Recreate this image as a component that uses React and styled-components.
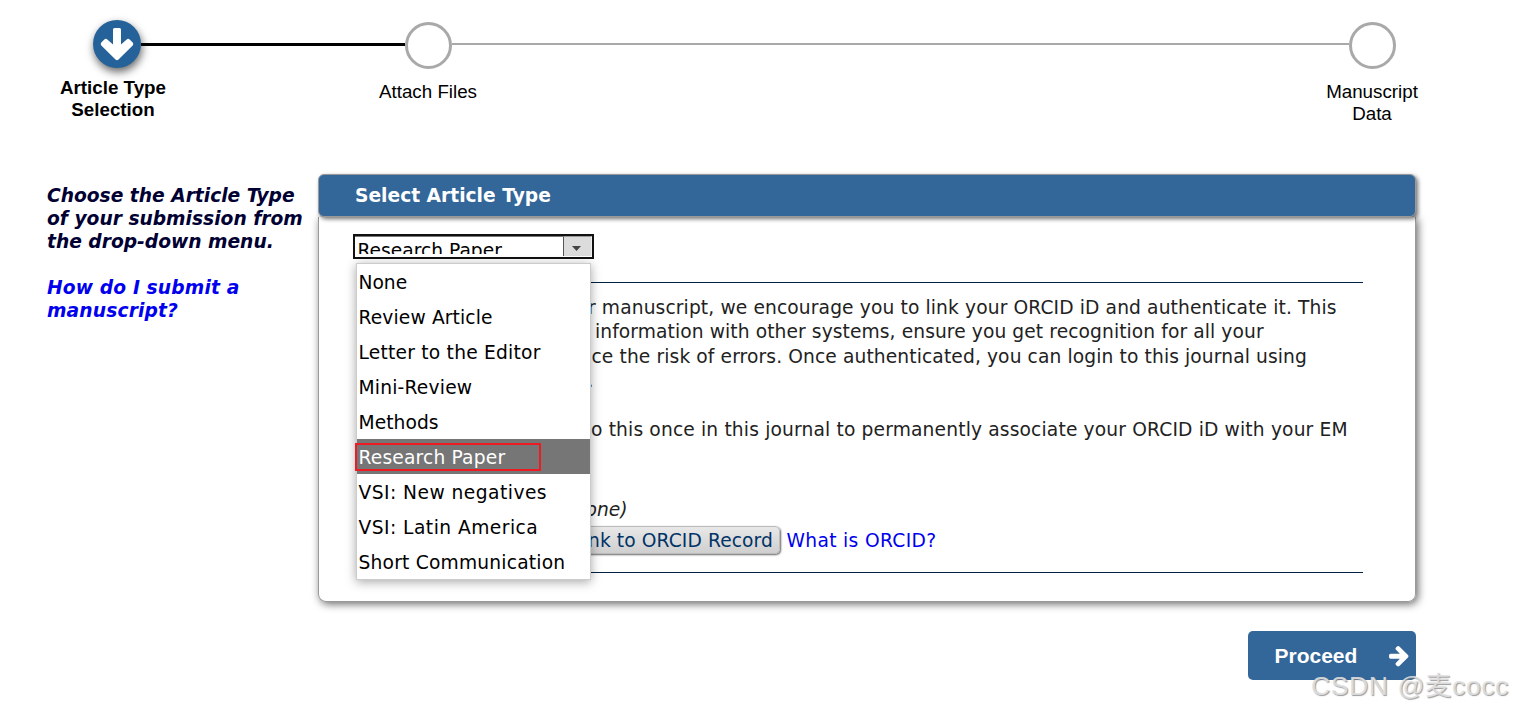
import React from 'react';
import styled, { createGlobalStyle } from 'styled-components';

const options = [
  { name: 'None', spacing: 0 },
  { name: 'Review Article', spacing: 0.13 },
  { name: 'Letter to the Editor', spacing: 0.22 },
  { name: 'Mini-Review', spacing: 0.2 },
  { name: 'Methods', spacing: 0.05 },
  { name: 'Research Paper', spacing: 0.17 },
  { name: 'VSI: New negatives', spacing: 0.46 },
  { name: 'VSI: Latin America', spacing: 0.46 },
  { name: 'Short Communication', spacing: 0.2 },
];

const selected = 'Research Paper';

function Stepper() {
  return (
    <nav>
      <Track>
        <ActiveDot>
          <svg width="48" height="48" viewBox="0 0 48 48">
            <path
              d="M20 9.500Q20 8 21.500 8H26.500Q28 8 28 9.500V24.600L33.700 19.500Q35.200 18.200 36.700 19.600L39.700 22.500Q41 24 39.700 25.500L25.500 39.600Q24 41 22.500 39.600L8.300 25.500Q7 24 8.300 22.500L11.300 19.600Q12.800 18.200 14.300 19.500L20 24.600Z"
              fill="#fff"
            />
          </svg>
        </ActiveDot>
        <Line $done />
        <Dot />
        <Line />
        <Dot />
      </Track>
      <Labels>
        <Label $active>Article Type Selection</Label>
        <Label>Attach Files</Label>
        <Label>Manuscript Data</Label>
      </Labels>
    </nav>
  );
}

function ArticleSelect() {
  return (
    <SelectWrap>
      <Select>
        <Value>{selected}</Value>
        <Arrow>
          <svg width="9" height="5" viewBox="0 0 9 5">
            <path d="M0 0H9L4.500 5Z" fill="#444" />
          </svg>
        </Arrow>
      </Select>
      <Menu>
        {options.map(({ name, spacing }) => (
          <Option key={name} $selected={name === selected} $spacing={spacing}>
            {name}
            {name === selected && <Marker />}
          </Option>
        ))}
      </Menu>
    </SelectWrap>
  );
}

function App() {
  return (
    <Page>
      <GlobalStyle />
      <Stepper />
      <Main>
        <Aside>
          <p>
            Choose the Article Type
            <br />
            of your submission from
            <br />
            the drop-down menu.
          </p>
          <a href="#help">
            How do I submit a
            <br />
            manuscript?
          </a>
        </Aside>
        <Card>
          <CardHeader>Select Article Type</CardHeader>
          <CardBody>
            <ArticleSelect />
            <Orcid>
              <Text $indent={232} $spacing={0.12}>
                r manuscript, we encourage you to link your ORCID iD and authenticate it. This
              </Text>
              <Text $indent={239} $spacing={0.09}>
                information with other systems, ensure you get recognition for all your
              </Text>
              <Text $indent={235.5} $spacing={0.11}>
                ce the risk of errors. Once authenticated, you can login to this journal using
              </Text>
              <Text $indent={231.5}>.</Text>
              <Text />
              <Text $indent={235} $spacing={0.15}>
                o this once in this journal to permanently associate your ORCID iD with your EM
              </Text>
              <Text />
              <Text />
              <Status>one)</Status>
              <LinkRow>
                <OrcidButton>nk to ORCID Record</OrcidButton>
                <a href="#orcid">What is ORCID?</a>
              </LinkRow>
            </Orcid>
          </CardBody>
        </Card>
      </Main>
      <Footer>
        <Proceed>
          Proceed
          <svg width="19.500" height="20.500" viewBox="0 181 1472 1558">
            <path
              d="M1472 960q0 54-37 91l-651 651q-39 37-91 37-51 0-90-37l-75-75q-38-38-38-91t38-91l293-293h-704q-52 0-84.500-37.500t-32.500-90.500v-128q0-53 32.500-90.500t84.500-37.500h704l-293-294q-38-36-38-90t38-90l75-75q38-38 90-38 53 0 91 38l651 651q37 35 37 90z"
              fill="#fff"
            />
          </svg>
        </Proceed>
        <Watermark>CSDN @麦cocc</Watermark>
      </Footer>
    </Page>
  );
}

export default App;

const GlobalStyle = createGlobalStyle`
  * {
    box-sizing: border-box;
  }

  body {
    margin: 0;
    background: #fff;
    overflow: hidden;
  }

  p {
    margin: 0;
  }

  a {
    color: #0000ee;
    text-decoration: none;
  }
`;

const Page = styled.div`
  width: 1514px;
  height: 713px;
  padding-top: 20px;
  overflow: hidden;
  font-family: 'DejaVu Sans', Verdana, sans-serif;
  font-size: 18.67px;
`;

const Track = styled.div`
  display: flex;
  align-items: flex-start;
  height: 52px;
  padding: 0 118px 0 93px;
`;

const ActiveDot = styled.div`
  width: 48px;
  height: 48px;
  border-radius: 50%;
  background: #256299;
  box-shadow: 1px 4px 8px rgba(0, 0, 0, 0.6);
`;

const Dot = styled.div`
  width: 47px;
  height: 47px;
  margin-top: 2px;
  border: 3px solid #a9a9a9;
  border-radius: 50%;
`;

const Line = styled.div`
  flex: ${(props) => (props.$done ? '0 0 264px' : '1')};
  height: ${(props) => (props.$done ? '3px' : '2px')};
  margin-top: 23px;
  background: ${(props) => (props.$done ? '#000' : '#a9a9a9')};
`;

const Labels = styled.div`
  display: grid;
  grid-template-columns: 120px 510px 1fr;
  height: 102px;
  padding: 5px 77px 0 53px;
  font-family: 'Liberation Sans', Arial, sans-serif;
  font-size: 18.75px;
  line-height: 22px;
  text-align: center;
`;

const Label = styled.div`
  padding-top: ${(props) => (props.$active ? '0' : '4px')};
  font-weight: ${(props) => (props.$active ? 'bold' : 'normal')};

  &:last-child {
    width: 130px;
    justify-self: end;
  }
`;

const Main = styled.main`
  display: flex;
  height: 428px;
`;

const Aside = styled.aside`
  width: 318px;
  padding: 10px 0 0 47px;
  color: #000033;
  font-weight: bold;
  font-style: italic;
  line-height: 23px;
  white-space: nowrap;

  p {
    margin-bottom: 23px;
  }

  a {
    letter-spacing: 0.15px;
  }
`;

const Card = styled.section`
  display: flex;
  flex-direction: column;
  width: 1098px;
`;

const CardHeader = styled.header`
  z-index: 1;
  height: 43px;
  padding-left: 36px;
  border: 1px solid #999;
  border-radius: 6px;
  background: #336699;
  box-shadow: 2px 2px 4px rgba(0, 0, 0, 0.55);
  color: #fff;
  font-weight: bold;
  line-height: 41px;
`;

const CardBody = styled.div`
  flex: 1;
  padding: 17px 52px 0 34px;
  border: 1px solid #999;
  border-top: none;
  border-radius: 0 0 8px 8px;
  box-shadow: 2px 2px 8px rgba(0, 0, 0, 0.6);
`;

const SelectWrap = styled.div`
  position: relative;
  height: 48px;
`;

const Select = styled.div`
  display: flex;
  width: 241px;
  height: 25px;
  border: 2px solid #111;
  background: #fff;
  line-height: 22px;
`;

const Value = styled.div`
  flex: 1;
  height: 18px;
  padding: 3px 0 0 2.5px;
  border-top: 1px solid #777;
  overflow: hidden;
`;

const Arrow = styled.div`
  display: flex;
  align-items: center;
  justify-content: center;
  width: 29px;
  height: 20px;
  padding: 3px 2px 0 0;
  border-top: 1px solid #999;
  border-left: 1px solid #555;
  border-right: 1px solid #eee;
  background: #dcdcdc;
`;

const Menu = styled.div`
  position: absolute;
  top: 29px;
  left: 3px;
  z-index: 1;
  width: 235px;
  height: 317px;
  border: 1px solid #ccc;
  background: #fff;
  box-shadow: 0 2px 10px rgba(0, 0, 0, 0.35);
`;

const Option = styled.div`
  position: relative;
  height: 35px;
  padding-left: 1.5px;
  background: ${(props) => (props.$selected ? '#767676' : '#fff')};
  color: ${(props) => (props.$selected ? '#fff' : '#000')};
  letter-spacing: ${(props) => props.$spacing}px;
  line-height: 38px;
  white-space: nowrap;
`;

const Marker = styled.div`
  position: absolute;
  top: 4px;
  left: -2px;
  width: 186px;
  height: 28px;
  border: 2px solid #ed1c24;
`;

const Orcid = styled.div`
  width: 1007px;
  height: 291px;
  margin-left: 3px;
  padding-top: 13px;
  border-top: 1px solid #002244;
  border-bottom: 1px solid #002244;
  color: #222;
  line-height: 24.4px;
`;

const Text = styled.p`
  height: 24.4px;
  padding-left: ${(props) => props.$indent || 0}px;
  letter-spacing: ${(props) => props.$spacing || 0}px;
  white-space: nowrap;
`;

const Status = styled.p`
  padding: 7px 0 0 229.5px;
  font-style: italic;
`;

const LinkRow = styled.div`
  display: flex;
  align-items: center;
  gap: 6.5px;
  margin-top: 3px;
  padding-left: 222px;

  a {
    padding-top: 3px;
    letter-spacing: 0.33px;
  }
`;

const OrcidButton = styled.button`
  width: 202px;
  height: 28px;
  padding: 2px 6px 0 0;
  border: 1px solid #bbb;
  border-radius: 5px;
  background: linear-gradient(#e8e8e8, #cfcfcf);
  box-shadow: 1px 1px 2px rgba(0, 0, 0, 0.6);
  color: #003366;
  font: inherit;
  letter-spacing: 0.1px;
  text-align: right;
  white-space: nowrap;
`;

const Footer = styled.footer`
  position: relative;
  display: flex;
  justify-content: flex-end;
  padding: 29px 98px 0 0;
`;

const Proceed = styled.button`
  display: flex;
  align-items: center;
  justify-content: space-between;
  width: 168px;
  height: 49px;
  padding: 0 7.5px 0 26.5px;
  border: none;
  border-radius: 5px;
  background: #336699;
  color: #fff;
  font: bold 21px 'Liberation Sans', Arial, sans-serif;

  svg {
    margin-top: 2px;
  }
`;

const Watermark = styled.div`
  position: absolute;
  top: 68px;
  left: 1311px;
  color: rgba(225, 225, 225, 0.9);
  font: 26.5px/32px 'Liberation Sans', 'Noto Sans CJK SC', sans-serif;
  letter-spacing: 0.6px;
  word-spacing: 1px;
  text-shadow: 1px 1px 1px rgba(130, 130, 130, 0.8);
  white-space: nowrap;
`;
